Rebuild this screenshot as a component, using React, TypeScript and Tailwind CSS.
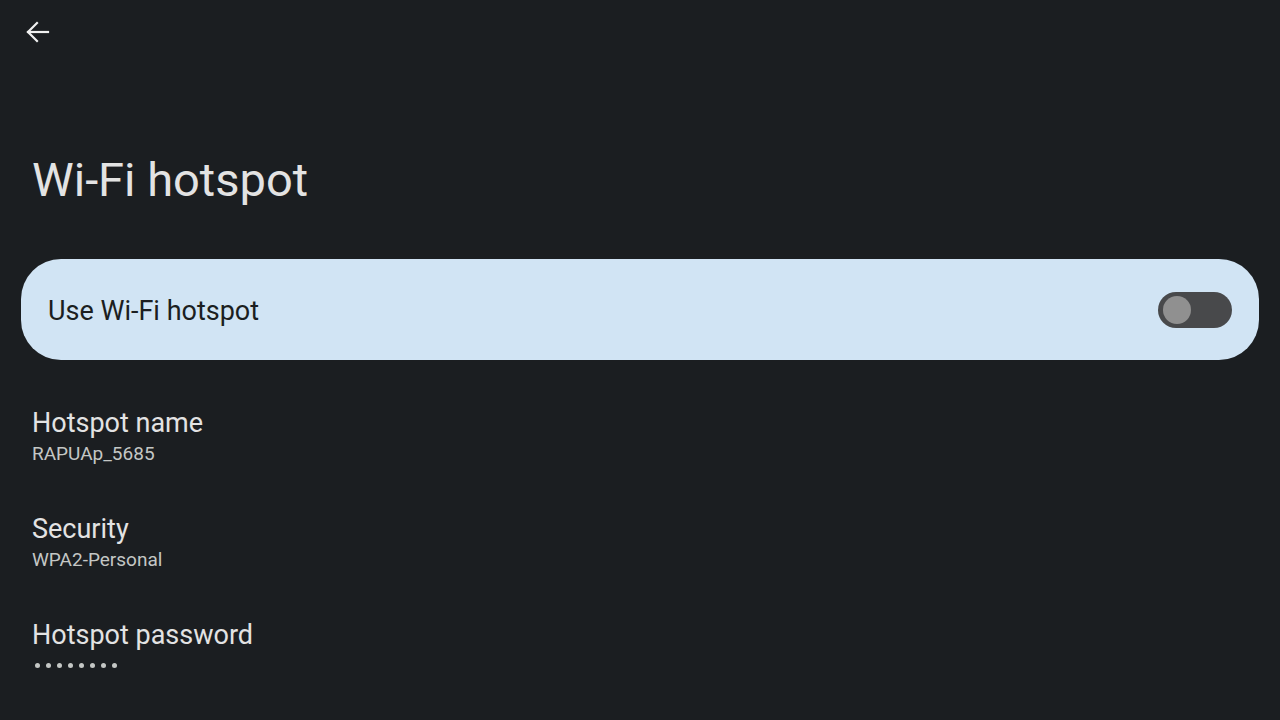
import React from "react";

function Item({ title, sub, dots }: { title: string; sub?: string; dots?: boolean }) {
  return (
    <div className="flex flex-col px-[32px] h-[106px] pt-[47px]">
      <div className="text-[27px] leading-[32px] text-[#e3e3e3]">{title}</div>
      {dots ? (
        <div className="flex gap-[6px] mt-[12px] ml-[3px]">
          {Array.from({ length: 8 }).map((_, i) => (
            <span key={i} className="w-[5px] h-[5px] rounded-full bg-[#c4c7c5]" />
          ))}
        </div>
      ) : (
        <div className="text-[19px] leading-[24px] text-[#c4c7c5] mt-[3px]">{sub}</div>
      )}
    </div>
  );
}

export default function App() {
  return (
    <div className="w-[1280px] h-[720px] bg-[#1b1e21] overflow-hidden" style={{ fontFamily: "Roboto, 'Noto Sans', sans-serif" }}>
      <div className="h-[64px] flex items-center pl-[22px]">
        <svg width="32" height="32" viewBox="0 0 32 32" fill="none" stroke="#f0f0f0" strokeWidth="2.2" strokeLinecap="square">
          <path d="M6 16H26" />
          <path d="M15 7L6 16L15 25" />
        </svg>
      </div>
      <div className="pl-[32px] pt-[90px] h-[195px]">
        <h1 className="text-[47px] leading-[52px] text-[#e3e3e3]">Wi-Fi hotspot</h1>
      </div>
      <div className="mx-[21px] h-[101px] rounded-[40px] bg-[#d1e4f4] flex items-center justify-between pl-[27px] pr-[27px]">
        <span className="text-[27px] leading-[32px] text-[#1b1e21] pt-[3px]">Use Wi-Fi hotspot</span>
        <div className="w-[74px] h-[36px] rounded-full bg-[#48494b] flex items-center pl-[5px]">
          <span className="w-[28px] h-[28px] rounded-full bg-[#909090]" />
        </div>
      </div>
      <div>
        <Item title="Hotspot name" sub="RAPUAp_5685" />
        <Item title="Security" sub="WPA2-Personal" />
        <Item title="Hotspot password" dots />
      </div>
    </div>
  );
}
